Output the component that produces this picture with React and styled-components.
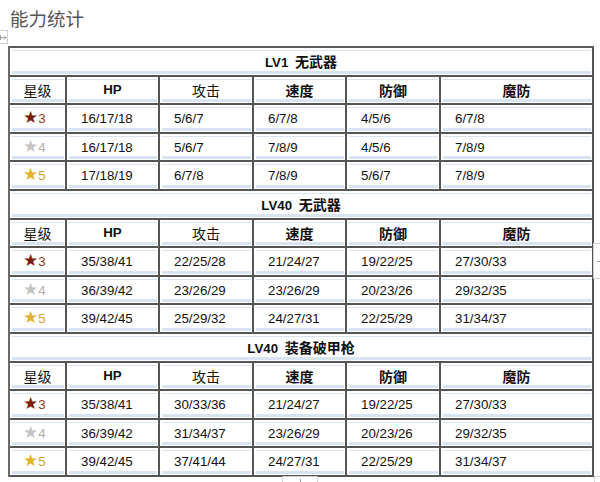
import React from "react";
import styled, { createGlobalStyle } from "styled-components";

const GlobalStyle = createGlobalStyle`
  html, body {
    margin: 0;
    background: #ffffff;
  }
  body {
    font-family: "Liberation Sans", "Noto Sans CJK SC", sans-serif;
  }
`;

const Page = styled.div`
  position: relative;
  width: 600px;
  height: 482px;
  overflow: hidden;
  padding: 0 8px;
  box-sizing: border-box;
`;

const Heading = styled.h2`
  margin: 0;
  height: 46px;
  padding: 6px 0 0 2px;
  box-sizing: border-box;
  font-family: "Noto Sans CJK SC", sans-serif;
  font-size: 18.5px;
  line-height: 24px;
  font-weight: normal;
  color: #555;
`;

const Table = styled.table`
  width: 584px;
  table-layout: fixed;
  border-collapse: separate;
  border-spacing: 0;
  border-top: 2px solid #5a5a5a;
  border-left: 2px solid #6a6a6a;
  font-size: 13.3px;
  color: #111;
`;

const stripe = "#d8e4f2";

const Cell = styled.td`
  height: 28.6px;
  box-sizing: border-box;
  padding: 0 ${(p) => (p.$center ? "0" : "14px")};
  border-right: 2px solid #555;
  border-bottom: 2px solid #555;
  text-align: ${(p) => (p.$center ? "center" : "left")};
  font-weight: ${(p) => (p.$bold ? 700 : 400)};
  white-space: nowrap;
  background-color: #fff;
  background-image: linear-gradient(
    to bottom,
    #fff 0,
    #fff 2px,
    ${stripe} 2px,
    ${stripe} 3px,
    #fff 3px,
    #fff calc(100% - 4px),
    ${stripe} calc(100% - 4px),
    ${stripe} calc(100% - 1px),
    #fff calc(100% - 1px)
  );
  background-size: calc(100% - 3px) 100%;
  background-position: center top;
  background-repeat: no-repeat;
`;

const Han = styled.span`
  font-family: "Noto Sans CJK SC", sans-serif;
  font-size: 14px;
  margin-left: ${(p) => (p.$gap ? "3px" : "0")};
`;

const StarLabel = styled.span`
  color: ${(p) => p.$color};
`;

const Star = styled.span`
  font-family: "DejaVu Sans", sans-serif;
  font-size: 17px;
  line-height: 13px;
  margin-left: -1px;
  color: ${(p) => p.$starColor};
`;

const Handle = styled.div`
  position: absolute;
  box-sizing: border-box;
  background: #fff;
  border: 1px solid #cfcfcf;
`;

const LeftHandle = styled(Handle)`
  left: -1px;
  top: 30px;
  width: 9px;
  height: 14px;
  display: flex;
  align-items: center;
  justify-content: center;
`;

const RightHandle = styled(Handle)`
  left: 593px;
  top: 243px;
  width: 10px;
  height: 36px;
  border-right: none;
  display: flex;
  align-items: center;
  &::after {
    content: "";
    margin-left: 3px;
    width: 4px;
    height: 1px;
    background: #999;
  }
`;

const BottomHandle = styled(Handle)`
  left: 282px;
  top: 476px;
  width: 36px;
  height: 10px;
  border-bottom: none;
  display: flex;
  justify-content: center;
  &::after {
    content: "";
    margin-top: 2px;
    width: 1px;
    height: 4px;
    background: #999;
  }
`;

const CornerHandle = styled(Handle)`
  left: 594px;
  top: 476px;
  width: 8px;
  height: 8px;
  border-color: #d4d4d4;
`;

const stars = [
  { n: 3, star: "#7a1e06", text: "#9c3a14" },
  { n: 4, star: "#c4c4c4", text: "#b0b0b0" },
  { n: 5, star: "#e3b22e", text: "#d4a22a" },
];

const sections = [
  {
    level: "LV1",
    name: "无武器",
    rows: [
      ["16/17/18", "5/6/7", "6/7/8", "4/5/6", "6/7/8"],
      ["16/17/18", "5/6/7", "7/8/9", "4/5/6", "7/8/9"],
      ["17/18/19", "6/7/8", "7/8/9", "5/6/7", "7/8/9"],
    ],
  },
  {
    level: "LV40",
    name: "无武器",
    rows: [
      ["35/38/41", "22/25/28", "21/24/27", "19/22/25", "27/30/33"],
      ["36/39/42", "23/26/29", "23/26/29", "20/23/26", "29/32/35"],
      ["39/42/45", "25/29/32", "24/27/31", "22/25/29", "31/34/37"],
    ],
  },
  {
    level: "LV40",
    name: "装备破甲枪",
    rows: [
      ["35/38/41", "30/33/36", "21/24/27", "19/22/25", "27/30/33"],
      ["36/39/42", "31/34/37", "23/26/29", "20/23/26", "29/32/35"],
      ["39/42/45", "37/41/44", "24/27/31", "22/25/29", "31/34/37"],
    ],
  },
];

const headers = [
  { text: "星级", han: true, bold: false },
  { text: "HP", han: false, bold: true },
  { text: "攻击", han: true, bold: false },
  { text: "速度", han: true, bold: true },
  { text: "防御", han: true, bold: true },
  { text: "魔防", han: true, bold: true },
];
const widths = [57, 93, 94, 93, 94, 153];

function Section({ level, name, rows }) {
  return (
    <>
      <tr>
        <Cell colSpan={6} $center $bold>
          {level} <Han $gap>{name}</Han>
        </Cell>
      </tr>
      <tr>
        {headers.map((h) => (
          <Cell key={h.text} $center $bold={h.bold}>
            {h.han ? <Han>{h.text}</Han> : h.text}
          </Cell>
        ))}
      </tr>
      {rows.map((r, i) => (
        <tr key={i}>
          <Cell>
            <Star $starColor={stars[i].star}>★</Star>
            <StarLabel $color={stars[i].text}>{stars[i].n}</StarLabel>
          </Cell>
          {r.map((v, j) => (
            <Cell key={j}>{v}</Cell>
          ))}
        </tr>
      ))}
    </>
  );
}

export default function App() {
  return (
    <Page>
      <GlobalStyle />
      <Heading>能力统计</Heading>
      <Table>
        <colgroup>
          {widths.map((w, i) => (
            <col key={i} style={{ width: w }} />
          ))}
        </colgroup>
        <tbody>
          {sections.map((s, i) => (
            <Section key={i} {...s} />
          ))}
        </tbody>
      </Table>
      <LeftHandle>
        <svg width="7" height="7" viewBox="0 0 7 7">
          <path d="M0.5 1v5M0.5 3.5h5.5M4 1.5l2 2-2 2" stroke="#888" strokeWidth="0.8" fill="none" />
        </svg>
      </LeftHandle>
      <RightHandle />
      <BottomHandle />
      <CornerHandle />
    </Page>
  );
}
